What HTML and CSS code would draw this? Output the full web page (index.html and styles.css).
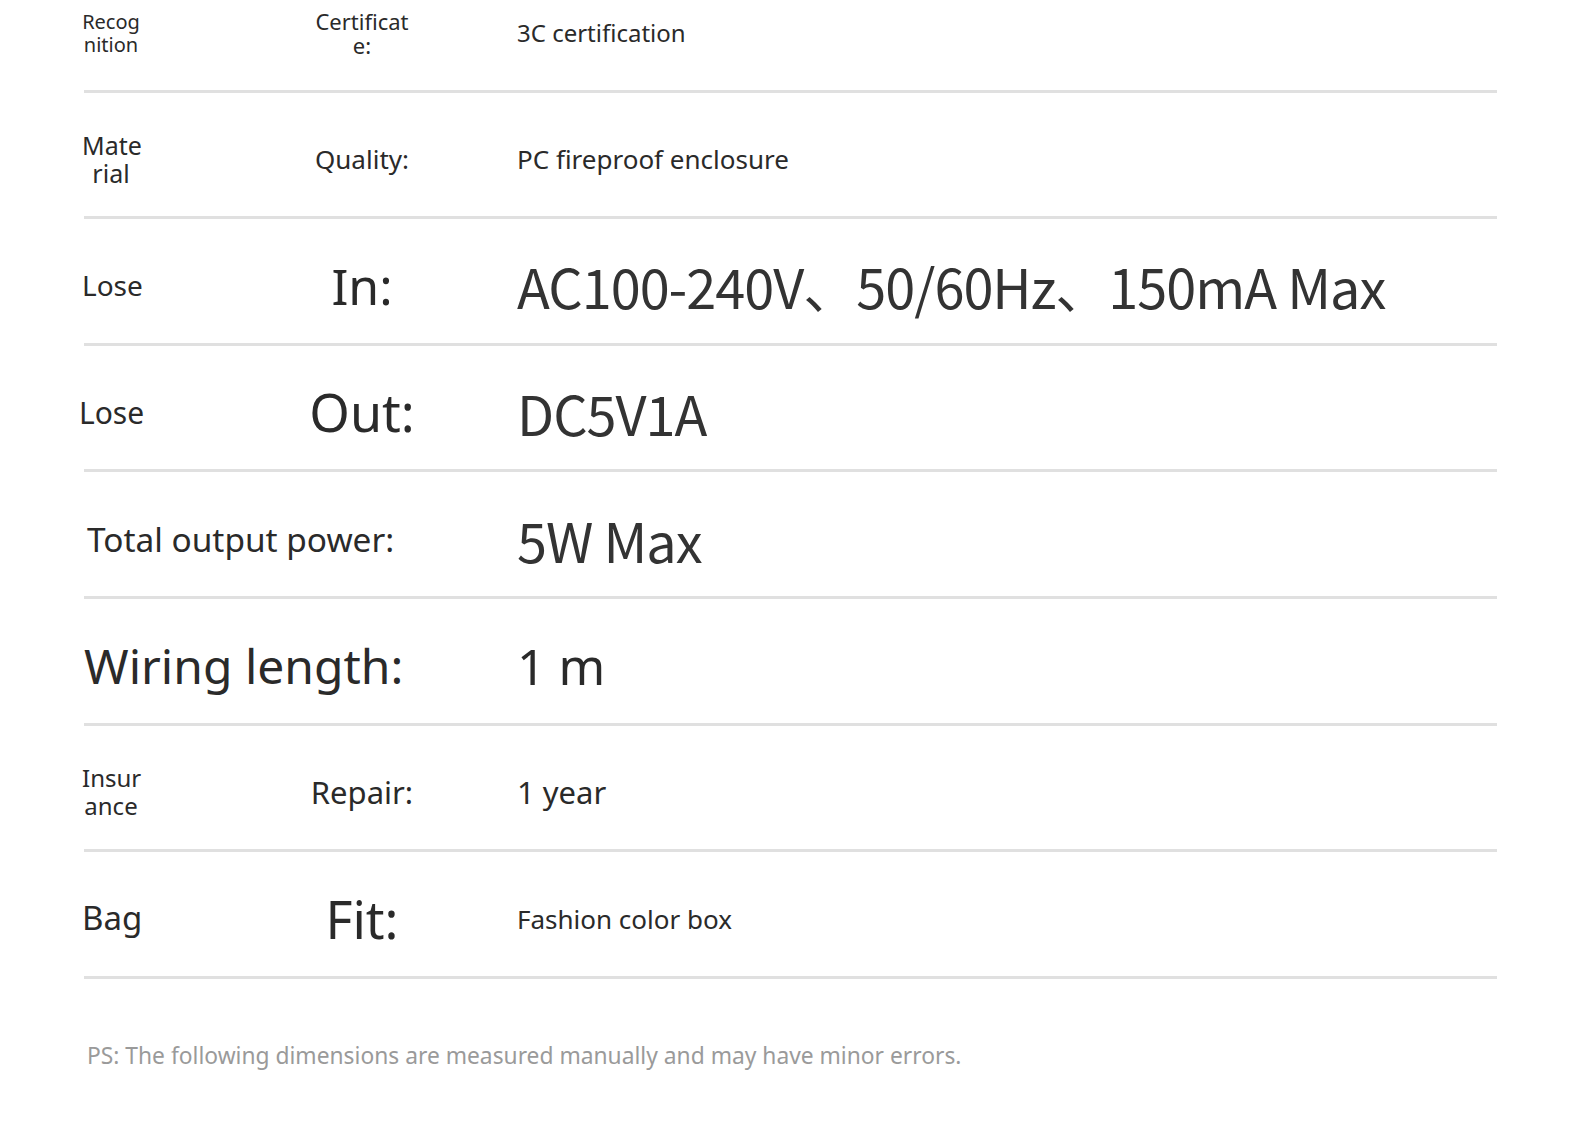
FILE: index.html
```html
<!DOCTYPE html>
<html lang="en">
<head>
<meta charset="utf-8">
<title>Specifications</title>
<link rel="stylesheet" href="styles.css">
</head>
<body>
<div class="page">
  <div class="spec">
    <div class="row">
      <div class="c1 f20">Recog<br>nition</div>
      <div class="c2 f22">Certificat<br>e:</div>
      <div class="c3 f24">3C certification</div>
    </div>
    <div class="row">
      <div class="c1 f25">Mate<br>rial</div>
      <div class="c2 f26">Quality:</div>
      <div class="c3 f26">PC fireproof enclosure</div>
    </div>
    <div class="row">
      <div class="c1 f28">Lose</div>
      <div class="c2 big">In:</div>
      <div class="c3 val">AC100-240V、50/60Hz、150mA Max</div>
    </div>
    <div class="row">
      <div class="c1 f30 nudge">Lose</div>
      <div class="c2 big52">Out:</div>
      <div class="c3 val">DC5V1A</div>
    </div>
    <div class="row">
      <div class="wide f33">Total output power:</div>
      <div class="c3 after-wide val">5W Max</div>
    </div>
    <div class="row">
      <div class="wide f48">Wiring length:</div>
      <div class="c3 after-wide f50">1 m</div>
    </div>
    <div class="row">
      <div class="c1 f24">Insur<br>ance</div>
      <div class="c2 f31">Repair:</div>
      <div class="c3 f31">1 year</div>
    </div>
    <div class="row">
      <div class="c1 f33">Bag</div>
      <div class="c2 big52">Fit:</div>
      <div class="c3 f26">Fashion color box</div>
    </div>
  </div>
  <p class="note">PS: The following dimensions are measured manually and may have minor errors.</p>
</div>
</body>
</html>
```
FILE: styles.css
```css
html, body {
  margin: 0;
  padding: 0;
  background: #ffffff;
}
body {
  font-family: "Noto Sans", "Open Sans", sans-serif;
  color: #2a2a2a;
}
.page {
  width: 1581px;
  height: 1139px;
  overflow: hidden;
}
.spec {
  margin: -34px 0 0 84px;
  width: 1413px;
}
.row {
  display: flex;
  align-items: center;
  height: 113.6px;
  padding-top: 10px;
  border-bottom: 3px solid #e0e0e0;
}
.c1 {
  width: 58px;
  margin-left: -2px;
  text-align: center;
  flex: none;
  line-height: 1.12;
}
.c1.nudge {
  margin-left: -5px;
  margin-right: 3px;
}
.c2 {
  width: 140px;
  margin-left: 152px;
  text-align: center;
  flex: none;
  line-height: 1.12;
}
.c3 {
  margin-left: 85px;
  white-space: nowrap;
}
.c3.after-wide {
  margin-left: 0;
}
.wide {
  width: 433px;
  flex: none;
  white-space: nowrap;
}
.f20 { font-size: 20px; line-height: 23px; }
.f22 { font-size: 22px; line-height: 24px; }
.f24 { font-size: 24px; line-height: 28px; }
.f25 { font-size: 25px; line-height: 28px; }
.f26 { font-size: 26px; }
.f28 { font-size: 28px; }
.f30 { font-size: 30px; }
.f31 { font-size: 31px; }
.f33 { font-size: 33px; }
.wide.f33 { padding-left: 3px; box-sizing: border-box; font-size: 33.4px; }
.f48 { font-size: 48px; }
.f50 { font-size: 50px; }
.big { font-size: 50px; }
.big52 { font-size: 52px; }
.val {
  font-family: "Noto Sans CJK SC", "Noto Sans", sans-serif;
  font-size: 54px;
  color: #333333;
  letter-spacing: -1px;
}
.note {
  margin: 61px 0 0 87px;
  font-size: 22.8px;
  color: #9a9a9a;
}
```
